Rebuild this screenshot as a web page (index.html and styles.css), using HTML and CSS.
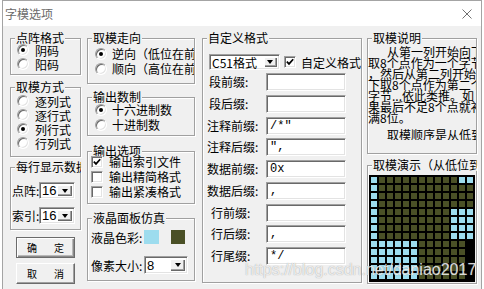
FILE: index.html
```html
<!DOCTYPE html>
<html>
<head>
<meta charset="utf-8">
<link rel="stylesheet" href="styles.css">
</head>
<body>
<div class="window">
  <div class="titlebar">
    <span class="title">字模选项</span>
    <svg class="close" width="10" height="10" viewBox="0 0 10 10"><path d="M0.5 0.5L9.5 9.5M9.5 0.5L0.5 9.5" stroke="#707070" stroke-width="1" fill="none"/></svg>
  </div>
  <div class="client">
    <div class="col col1">
      <div class="group c1g1">
        <div class="lg">点阵格式</div>
        <div class="gbody pt2">
          <div class="opt o14"><span class="radio on"></span>阴码</div>
          <div class="opt o14"><span class="radio"></span>阳码</div>
        </div>
      </div>
      <div class="group c1g2">
        <div class="lg">取模方式</div>
        <div class="gbody pt4">
          <div class="opt o14"><span class="radio"></span>逐列式</div>
          <div class="opt o14"><span class="radio"></span>逐行式</div>
          <div class="opt o14"><span class="radio on"></span>列行式</div>
          <div class="opt o14"><span class="radio"></span>行列式</div>
        </div>
      </div>
      <div class="group c1g3">
        <div class="lg">每行显示数据</div>
        <div class="gbody pt12">
          <div class="crow"><span class="clabel">点阵:</span><div class="combo cnum"><span class="val">16</span><span class="dd"></span></div></div>
          <div class="crow mt8"><span class="clabel">索引:</span><div class="combo cnum"><span class="val">16</span><span class="dd"></span></div></div>
        </div>
      </div>
      <div class="btn default"><span>确</span><span>定</span></div>
      <div class="btn second"><span>取</span><span>消</span></div>
    </div>

    <div class="col col2">
      <div class="group c2g1">
        <div class="lg">取模走向</div>
        <div class="gbody pt5">
          <div class="opt o15"><span class="radio on"></span>逆向（低位在前）</div>
          <div class="opt o15"><span class="radio"></span>顺向（高位在前）</div>
        </div>
      </div>
      <div class="group c2g2">
        <div class="lg">输出数制</div>
        <div class="gbody pt2">
          <div class="opt o15"><span class="radio on"></span>十六进制数</div>
          <div class="opt o15"><span class="radio"></span>十进制数</div>
        </div>
      </div>
      <div class="group c2g3">
        <div class="lg">输出选项</div>
        <div class="gbody">
          <div class="opt o15"><span class="chk on"><svg width="8" height="8" viewBox="0 0 8 8"><path d="M0.8 3.6L3 5.9L7.2 1.2" stroke="#000" stroke-width="1.7" fill="none"/></svg></span>输出索引文件</div>
          <div class="opt o15"><span class="chk"></span>输出精简格式</div>
          <div class="opt o15"><span class="chk"></span>输出紧凑格式</div>
        </div>
      </div>
      <div class="group c2g4">
        <div class="lg">液晶面板仿真</div>
        <div class="gbody pt9">
          <div class="lrow"><span class="llabel">液晶色彩:</span><span class="sw sw1"></span><span class="sw sw2"></span></div>
          <div class="lrow2"><span class="llabel">像素大小:</span><div class="combo cpix"><span class="val">8</span><span class="dd"></span></div></div>
        </div>
      </div>
    </div>

    <div class="col col3">
      <div class="group c3g1">
        <div class="lg">自定义格式</div>
        <div class="gbody pt13">
          <div class="row0">
            <div class="combo cfmt"><span class="val vfmt">C51格式</span><span class="dd"></span></div>
            <span class="chk on ck3"><svg width="8" height="8" viewBox="0 0 8 8"><path d="M0.8 3.6L3 5.9L7.2 1.2" stroke="#000" stroke-width="1.7" fill="none"/></svg></span>
            <span class="cktext">自定义格式</span>
          </div>
          <div class="fields">
            <span class="flabel p7">段前缀:</span><span class="tb"></span>
            <span class="flabel p7">段后缀:</span><span class="tb"></span>
            <span class="flabel p5">注释前缀:</span><span class="tb">/*"</span>
            <span class="flabel p5">注释后缀:</span><span class="tb">",</span>
            <span class="flabel p5">数据前缀:</span><span class="tb">0x</span>
            <span class="flabel p5">数据后缀:</span><span class="tb">,</span>
            <span class="flabel p9">行前缀:</span><span class="tb"></span>
            <span class="flabel p9">行后缀:</span><span class="tb">,</span>
            <span class="flabel p9">行尾缀:</span><span class="tb">*/</span>
          </div>
        </div>
      </div>
    </div>

    <div class="col col4">
      <div class="group c4g1">
        <div class="lg">取模说明</div>
        <div class="gbody desc">
          <div class="ind">从第一列开始向下每</div>
          <div>取8个点作为一个字节</div>
          <div>，然后从第二列开始向</div>
          <div>下取8个点作为第二个字</div>
          <div>字节...依此类推。如</div>
          <div>果最后不足8个点就补</div>
          <div>满8位。</div>
          <div class="ind last">取模顺序是从低到高位</div>
        </div>
      </div>
      <div class="group c4g2">
        <div class="lg">取模演示（从低位到高位）</div>
        <div class="gbody pt7">
          <div class="pix">
            <i class="b"></i><i></i><i></i><i></i><i></i><i></i><i></i><i></i><i></i><i></i><i></i><i class="b"></i><i class="b"></i>
            <i class="b"></i><i></i><i></i><i></i><i></i><i></i><i></i><i></i><i></i><i></i><i></i><i></i><i></i>
            <i class="b"></i><i></i><i></i><i></i><i></i><i></i><i></i><i></i><i></i><i></i><i></i><i></i><i></i>
            <i class="b"></i><i></i><i></i><i></i><i></i><i></i><i></i><i></i><i></i><i></i><i></i><i></i><i></i>
            <i class="b"></i><i></i><i></i><i></i><i></i><i></i><i></i><i></i><i></i><i></i><i class="b"></i><i class="b"></i><i class="b"></i>
            <i class="b"></i><i></i><i></i><i></i><i></i><i></i><i></i><i></i><i></i><i></i><i class="b"></i><i class="b"></i><i class="b"></i>
            <i class="b"></i><i></i><i></i><i></i><i></i><i></i><i></i><i></i><i></i><i></i><i class="b"></i><i class="b"></i><i class="b"></i>
            <i class="b"></i><i></i><i></i><i></i><i></i><i></i><i></i><i></i><i></i><i></i><i class="b"></i><i class="b"></i><i class="b"></i>
            <i class="b"></i><i class="b"></i><i class="b"></i><i class="b"></i><i class="b"></i><i class="b"></i><i></i><i></i><i></i><i></i><i></i><i></i><i class="k"></i>
            <i class="b"></i><i class="b"></i><i class="b"></i><i class="b"></i><i class="b"></i><i class="b"></i><i></i><i></i><i></i><i></i><i></i><i></i><i class="k"></i>
            <i class="b"></i><i class="b"></i><i class="b"></i><i class="b"></i><i class="b"></i><i class="b"></i><i></i><i></i><i></i><i></i><i></i><i></i><i class="k"></i>
            <i class="b"></i><i class="b"></i><i class="b"></i><i class="b"></i><i class="b"></i><i class="b"></i><i></i><i></i><i></i><i></i><i></i><i></i><i class="k"></i>
            <i class="b"></i><i class="b"></i><i class="b"></i><i class="b"></i><i class="b"></i><i class="b"></i><i></i><i></i><i></i><i></i><i></i><i></i><i class="k"></i>
          </div>
        </div>
      </div>
    </div>
  </div>
</div>
<div class="wm">https://blog.csdn.net/daniao2017</div>
</body>
</html>
```

FILE: styles.css
```css
html, body {
  margin: 0;
  padding: 0;
}
body {
  position: relative;
  width: 484px;
  height: 289px;
  overflow: hidden;
  background: #ffffff;
  font-family: "Noto Sans CJK SC", "Noto Sans", sans-serif;
  font-size: 12px;
  color: #000;
}
.window {
  margin-left: 2px;
  width: 480px;
  height: 289px;
  box-sizing: border-box;
  border: 1px solid #a4a4a4;
  border-bottom: none;
}
.titlebar {
  height: 25px;
  background: #fff;
  display: flex;
  align-items: center;
  justify-content: space-between;
  padding: 0 9px 0 2px;
}
.title {
  color: #6a6a6a;
  font-size: 12px;
  line-height: 16px;
}
.close { display: block; }
.client {
  height: 263px;
  background: #f0f0f0;
  display: flex;
  align-items: flex-start;
  padding-left: 7px;
}
.col { display: flex; flex-direction: column; }
.col1 { width: 71px; margin-top: 12px; }
.col2 { width: 108px; margin-left: 6px; margin-top: 12px; }
.col3 { width: 160px; margin-left: 7px; margin-top: 12px; }
.col4 { width: 110px; margin-left: 5px; margin-top: 12px; }

.group {
  box-sizing: border-box;
  border: 1px solid #a0a0a0;
  box-shadow: inset 1px 1px 0 #fff, 1px 1px 0 #fff;
}
.lg {
  height: 16px;
  line-height: 16px;
  margin: -9px 0 -5px 4px;
  padding: 0 1px;
  background: linear-gradient(#f0f0f0, #f0f0f0) 0 2px / 100% 12px no-repeat;
  width: max-content;
  max-width: calc(100% - 5px);
  white-space: nowrap;
  overflow: hidden;
}
.gbody { overflow: hidden; white-space: nowrap; }
.pt2 { padding-top: 2px; }
.pt4 { padding-top: 4px; }
.pt5 { padding-top: 5px; }
.pt7 { padding-top: 7px; }
.pt9 { padding-top: 9px; }
.pt12 { padding-top: 12px; }
.pt13 { padding-top: 13px; }
.mt8 { margin-top: 8px; }

.c1g1 { height: 37px; }
.c1g2 { height: 70px; margin-top: 12px; }
.c1g3 { height: 63px; margin-top: 10px; }
.c2g1 { height: 46px; }
.c2g2 { height: 39px; margin-top: 13px; }
.c2g3 { height: 53px; margin-top: 15px; }
.c2g4 { height: 63px; margin-top: 14px; }
.c3g1 { height: 245px; }
.c4g1 { height: 116px; }
.c4g2 { height: 119px; margin-top: 11px; }

.opt { display: flex; align-items: center; }
.o14 { height: 14px; }
.o15 { height: 15px; }
.radio {
  flex: none;
  width: 12px;
  height: 12px;
  box-sizing: border-box;
  border-radius: 50%;
  background: #fff;
  border: 1px solid;
  border-color: #a0a0a0 #ffffff #ffffff #a0a0a0;
  box-shadow: inset 1px 1px 0 #696969, inset -1px -1px 0 #e3e3e3;
  display: flex;
  align-items: center;
  justify-content: center;
}
.col1 .radio { margin: 0 6px 0 6px; }
.col2 .radio { margin: 0 5px 0 7px; }
.radio.on::after {
  content: "";
  width: 4px;
  height: 4px;
  border-radius: 50%;
  background: #000;
}
.chk {
  flex: none;
  width: 12px;
  height: 12px;
  box-sizing: border-box;
  background: #fff;
  border: 1px solid;
  border-color: #a0a0a0 #ffffff #ffffff #a0a0a0;
  box-shadow: inset 1px 1px 0 #696969, inset -1px -1px 0 #e3e3e3;
  display: flex;
  align-items: center;
  justify-content: center;
}
.col2 .chk { margin: 0 6px 0 3px; }
.chk svg { display: block; }

.crow { display: flex; align-items: center; height: 17px; }
.clabel { margin-left: 1px; width: 27px; }
.combo {
  display: flex;
  box-sizing: border-box;
  background: #fff;
  border: 1px solid;
  border-color: #a0a0a0 #ffffff #ffffff #a0a0a0;
  box-shadow: inset 1px 1px 0 #696969, inset -1px -1px 0 #e3e3e3;
  padding: 1px;
}
.cnum { width: 36px; height: 17px; }
.cpix { width: 44px; height: 18px; }
.cfmt { width: 73px; height: 16px; }
.val {
  flex: 1;
  display: flex;
  align-items: center;
  font-family: "Liberation Sans", Arial, sans-serif;
  font-size: 13px;
  padding-left: 1px;
  white-space: nowrap;
}
.vfmt {
  font-family: "Noto Sans CJK SC", sans-serif;
  font-size: 12px;
}
.dd {
  flex: none;
  width: 15px;
  margin: 1px 1px 1px 0;
  background: #f0f0f0;
  box-shadow: inset 1px 1px 0 #fff, inset -1px -1px 0 #696969, inset -2px -2px 0 #a0a0a0;
  display: flex;
  align-items: center;
  justify-content: center;
}
.cfmt .dd { width: 13px; }
.dd::after {
  content: "";
  border-left: 3.5px solid transparent;
  border-right: 3.5px solid transparent;
  border-top: 4px solid #000;
}

.btn {
  box-sizing: border-box;
  margin-left: 6px;
  width: 59px;
  height: 21px;
  display: flex;
  justify-content: space-between;
  align-items: center;
  padding: 0 10px;
  font-size: 10px;
  background: #f0f0f0;
}
.btn.default {
  margin-top: 7px;
  border: 1px solid #6b6b6b;
  box-shadow: inset 1px 1px 0 #fff, inset -1px -1px 0 #8a8a8a, inset -2px -2px 0 #b8b8b8;
}
.btn.second {
  margin-top: 5px;
  border: 1px solid;
  border-color: #fff #6b6b6b #6b6b6b #fff;
  box-shadow: inset -1px -1px 0 #a0a0a0;
}

.lrow { display: flex; align-items: center; height: 14px; }
.lrow2 { display: flex; align-items: center; height: 18px; margin-top: 12px; }
.llabel { margin-left: 3px; width: 53px; }
.sw { display: block; height: 14px; flex: none; }
.sw1 { width: 15px; background: #9ddcee; }
.sw2 { width: 14px; margin-left: 12px; background: #4a5026; }

.row0 { display: flex; align-items: center; height: 16px; padding-left: 6px; }
.ck3 { margin: 0 5px 0 4px; }
.cktext { white-space: nowrap; }
.fields {
  display: grid;
  grid-template-columns: 63px 80px;
  grid-auto-rows: 18px;
  row-gap: 3.75px;
  margin-top: 3px;
}
.flabel { line-height: 18px; white-space: nowrap; }
.p5 { padding-left: 4px; }
.p7 { padding-left: 6px; }
.p9 { padding-left: 8px; }
.tb {
  box-sizing: border-box;
  height: 18px;
  background: #fff;
  border: 1px solid;
  border-color: #a0a0a0 #ffffff #ffffff #a0a0a0;
  box-shadow: inset 1px 1px 0 #696969, inset -1px -1px 0 #e3e3e3;
  padding-left: 3px;
  font-family: "Liberation Mono", monospace;
  font-size: 12px;
  line-height: 16px;
  white-space: pre;
}

.desc {
  padding-top: 5px;
  line-height: 11px;
}
.desc div { white-space: nowrap; }
.desc .ind { padding-left: 19px; }
.desc .last { margin-top: 6px; }

.pix {
  margin-left: 1px;
  box-sizing: border-box;
  width: 106px;
  height: 107px;
  overflow: hidden;
  background: #000;
  padding: 2px 0 0 2px;
  display: grid;
  grid-template-columns: repeat(13, 6px);
  grid-auto-rows: 6px;
  gap: 2px;
}
.pix i { display: block; background: #4a5026; }
.pix i.b { background: #9ddcee; }
.pix i.k { background: #000; }

.wm {
  position: absolute;
  left: 245px;
  top: 261px;
  font-family: "Liberation Sans", Arial, sans-serif;
  font-size: 16px;
  line-height: 18px;
  color: rgba(255, 255, 255, 0.8);
  text-shadow: 0 0 1px rgba(110, 110, 110, 0.7);
  white-space: nowrap;
  pointer-events: none;
}
```
